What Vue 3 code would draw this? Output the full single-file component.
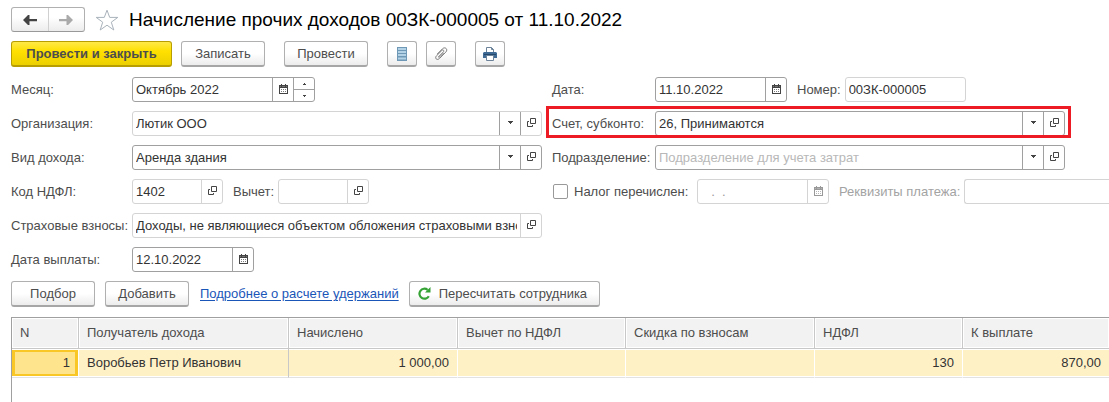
<template>
    <main class="document">
        <svg class="sprite" aria-hidden="true">
            <symbol id="icon-open" viewBox="0 0 9 9">
                <path d="M3.5 .5h5v5h-5zM2 3.5H.5v5h5V7" fill="none" stroke="currentColor" />
            </symbol>
            <symbol id="icon-calendar" viewBox="0 0 9 10">
                <path d="M0 1h9v9H0zM1 4v5h7V4z" fill="currentColor" fill-rule="evenodd" />
                <path d="M2.5 0v1M6.5 0v1" stroke="currentColor" />
                <path d="M2 5.5h1m1 0h1m1 0h1M2 7.5h1m1 0h1m1 0h1" stroke="currentColor" opacity=".7" />
                <path d="M1 2.5h1m1 0h3m1 0h1" stroke="#fff" opacity=".25" />
            </symbol>
            <symbol id="icon-caret" viewBox="0 0 5 3">
                <path d="M0 0h5v1H4v1H3v1H2V2H1V1H0z" fill="currentColor" />
            </symbol>
        </svg>

        <header class="title-bar">
            <div class="history">
                <button type="button" aria-label="Назад">
                    <svg width="14" height="10" viewBox="0 0 14 10">
                        <path d="M0 5l5-5h1.500v4H14v2.200H6.500V10H5z" fill="#444" />
                    </svg>
                </button>
                <button type="button" aria-label="Вперед" class="forward">
                    <svg width="14" height="10" viewBox="0 0 14 10">
                        <path d="M14 5L9 0H7.500v4H0v2.200h7.500V10H9z" fill="#aaa" />
                    </svg>
                </button>
            </div>
            <svg class="star" width="24" height="22" viewBox="0 0 24 22">
                <path d="M12 1.2l2.7 7.2h8.1l-6.5 4.8 2.5 7.8-6.8-4.8L5.200 21l2.500-7.800L1.200 8.400h8.100z" fill="#fff" stroke="#a9b2ba" />
            </svg>
            <h1>Начисление прочих доходов 00ЗК-000005 от 11.10.2022</h1>
        </header>

        <div class="toolbar">
            <button type="button" class="btn primary">Провести и закрыть</button>
            <button type="button" class="btn">Записать</button>
            <button type="button" class="btn group-start">Провести</button>
            <button type="button" class="btn icon group-start" aria-label="Движения">
                <svg width="10" height="14" viewBox="0 0 10 14">
                    <path d="M0 0h10v14H0z" fill="#6e98b5" />
                    <path d="M1 2h8M1 5h8M1 8h8M1 11.500h8" stroke="#b4d2e6" stroke-width="2" />
                </svg>
            </button>
            <button type="button" class="btn icon" aria-label="Файлы">
                <svg width="14" height="14" viewBox="0 0 14 14">
                    <path d="M4.500 9.800L9.300 5c1.300-1.300-.2-2.800-1.500-1.500L2.600 8.700c-2.400 2.400.4 5.200 2.800 2.800l6.300-6.300c2.800-2.800-.6-6-3.300-3.300L3.200 7.100M4.300 9.900c.5.500 1.200.2 1.700-.3l3.600-3.600" fill="none" stroke="#777" />
                </svg>
            </button>
            <button type="button" class="btn icon group-start" aria-label="Печать">
                <svg width="14" height="14" viewBox="0 0 14 14">
                    <path d="M3.500 5V.5h5l2 2V5" fill="#fff" stroke="#6b8299" />
                    <path d="M8.500 .5v2h2" fill="none" stroke="#6b8299" />
                    <path d="M1 5h12l1 1v5H0V6z" fill="#3f6a93" />
                    <path d="M1 7.500h12" stroke="#24486c" />
                    <path d="M3.500 8.500h7v5h-7z" fill="#fff" stroke="#6b8299" />
                </svg>
            </button>
        </div>

        <form class="form" @submit.prevent>
            <div class="column">
                <div class="row">
                    <label for="month">Месяц:</label>
                    <div class="field month">
                        <input id="month" v-model="doc.month" type="text">
                        <button type="button" class="pick" aria-label="Выбрать месяц"><svg width="9" height="10"><use href="#icon-calendar" /></svg></button>
                        <div class="spinner">
                            <button type="button" aria-label="Следующий месяц"><svg width="3" height="2" viewBox="0 0 3 2"><path d="M1 0h1v1h1v1H0V1h1z" fill="#444" /></svg></button>
                            <button type="button" aria-label="Предыдущий месяц"><svg width="3" height="2" viewBox="0 0 3 2"><path d="M0 0h3v1H2v1H1V1H0z" fill="#444" /></svg></button>
                        </div>
                    </div>
                </div>
                <div class="row">
                    <label for="company">Организация:</label>
                    <div class="field wide quiet">
                        <div class="combo">
                            <select id="company"><option>Лютик ООО</option></select>
                            <span class="caret"><svg width="5" height="3"><use href="#icon-caret" /></svg></span>
                        </div>
                        <button type="button" class="pick dark" aria-label="Открыть организацию"><svg width="9" height="9"><use href="#icon-open" /></svg></button>
                    </div>
                </div>
                <div class="row">
                    <label for="income">Вид дохода:</label>
                    <div class="field wide">
                        <div class="combo">
                            <select id="income"><option>Аренда здания</option></select>
                            <span class="caret"><svg width="5" height="3"><use href="#icon-caret" /></svg></span>
                        </div>
                        <button type="button" class="pick" aria-label="Открыть вид дохода"><svg width="9" height="9"><use href="#icon-open" /></svg></button>
                    </div>
                </div>
                <div class="row">
                    <label for="code">Код НДФЛ:</label>
                    <div class="field code quiet">
                        <input id="code" v-model="doc.code" type="text" readonly>
                        <button type="button" class="pick" aria-label="Открыть код"><svg width="9" height="9"><use href="#icon-open" /></svg></button>
                    </div>
                    <label for="deduction" class="inline">Вычет:</label>
                    <div class="field code quiet">
                        <input id="deduction" type="text" readonly>
                        <button type="button" class="pick" aria-label="Открыть вычет"><svg width="9" height="9"><use href="#icon-open" /></svg></button>
                    </div>
                </div>
                <div class="row">
                    <label for="insurance">Страховые взносы:</label>
                    <div class="field wide quiet">
                        <div class="clip"><input id="insurance" v-model="doc.insurance" type="text" readonly></div>
                        <button type="button" class="pick" aria-label="Открыть взносы"><svg width="9" height="9"><use href="#icon-open" /></svg></button>
                    </div>
                </div>
                <div class="row">
                    <label for="pay-date">Дата выплаты:</label>
                    <div class="field pay-date">
                        <input id="pay-date" v-model="doc.payDate" type="text">
                        <button type="button" class="pick" aria-label="Выбрать дату выплаты"><svg width="9" height="10"><use href="#icon-calendar" /></svg></button>
                    </div>
                </div>
            </div>

            <div class="column right">
                <div class="row">
                    <label for="date">Дата:</label>
                    <div class="field date">
                        <input id="date" v-model="doc.date" type="text">
                        <button type="button" class="pick" aria-label="Выбрать дату"><svg width="9" height="10"><use href="#icon-calendar" /></svg></button>
                    </div>
                    <label for="number" class="inline">Номер:</label>
                    <div class="field number quiet">
                        <input id="number" v-model="doc.number" type="text" readonly>
                    </div>
                </div>
                <div class="row marked">
                    <label for="account">Счет, субконто:</label>
                    <div class="field wide">
                        <div class="combo">
                            <select id="account"><option>26, Принимаются</option></select>
                            <span class="caret"><svg width="5" height="3"><use href="#icon-caret" /></svg></span>
                        </div>
                        <button type="button" class="pick" aria-label="Открыть счет"><svg width="9" height="9"><use href="#icon-open" /></svg></button>
                    </div>
                </div>
                <div class="row">
                    <label for="department">Подразделение:</label>
                    <div class="field wide">
                        <div class="combo">
                            <select id="department" class="empty"><option>Подразделение для учета затрат</option></select>
                            <span class="caret"><svg width="5" height="3"><use href="#icon-caret" /></svg></span>
                        </div>
                        <button type="button" class="pick" aria-label="Открыть подразделение"><svg width="9" height="9"><use href="#icon-open" /></svg></button>
                    </div>
                </div>
                <div class="row payment">
                    <input id="tax-paid" v-model="doc.taxPaid" type="checkbox">
                    <label for="tax-paid" class="check-label">Налог перечислен:</label>
                    <div class="field date quiet off">
                        <input v-model="doc.taxDate" type="text" aria-label="Дата перечисления" disabled>
                        <button type="button" class="pick" aria-label="Выбрать дату перечисления" disabled><svg width="9" height="10"><use href="#icon-calendar" /></svg></button>
                    </div>
                    <label for="details" class="inline details-label">Реквизиты платежа:</label>
                    <div class="field details quiet">
                        <input id="details" type="text" disabled>
                    </div>
                </div>
            </div>
        </form>

        <div class="toolbar table-tools">
            <button type="button" class="btn">Подбор</button>
            <button type="button" class="btn">Добавить</button>
            <a href="#">Подробнее о расчете удержаний</a>
            <button type="button" class="btn recalc">
                <svg width="13" height="13" viewBox="0 0 13 13">
                    <path d="M10.800 9.200A5 5 0 1 1 9.600 2.800" fill="none" stroke="#35a235" stroke-width="2.200" />
                    <path d="M12.500 0v5.500H7z" fill="#35a235" />
                </svg>
                Пересчитать сотрудника
            </button>
        </div>

        <div class="table-area">
            <table>
                <colgroup>
                    <col v-for="col in columns" :key="col.key" :style="{ width: col.width }">
                </colgroup>
                <thead>
                    <tr>
                        <th v-for="col in columns" :key="col.key">{{ col.title }}</th>
                    </tr>
                </thead>
                <tbody>
                    <tr v-for="row in rows" :key="row.n">
                        <td v-for="col in columns" :key="col.key" :class="[col.key, { num: col.num }]">{{ row[col.key] }}</td>
                    </tr>
                </tbody>
            </table>
        </div>
    </main>
</template>

<script setup>
import { reactive, ref } from 'vue'

const doc = reactive({
    month: 'Октябрь 2022',
    code: '1402',
    insurance: 'Доходы, не являющиеся объектом обложения страховыми взносами',
    payDate: '12.10.2022',
    date: '11.10.2022',
    number: '00ЗК-000005',
    taxPaid: false,
    taxDate: '  .  .'
})

// Shares of the table width, in percent
const share = (px) => `${(px / 1097) * 100}%`

const columns = [
    { key: 'n', title: 'N', width: share(67), num: true },
    { key: 'person', title: 'Получатель дохода', width: share(210) },
    { key: 'accrued', title: 'Начислено', width: share(169), num: true },
    { key: 'deduction', title: 'Вычет по НДФЛ', width: share(168), num: true },
    { key: 'discount', title: 'Скидка по взносам', width: share(189), num: true },
    { key: 'tax', title: 'НДФЛ', width: share(148), num: true },
    { key: 'total', title: 'К выплате', width: share(146), num: true }
]

const rows = ref([
    { n: 1, person: 'Воробьев Петр Иванович', accrued: '1 000,00', deduction: '', discount: '', tax: '130', total: '870,00' }
])
</script>

<style>
body {
    margin: 0;
    background: #fff;
}
</style>

<style scoped>
.document {
    box-sizing: border-box;
    display: flex;
    flex-direction: column;
    min-height: 100vh;
    padding: 7px 0 0 11px;
    overflow: hidden;
    font: 13px/16px "Liberation Sans", Arial, sans-serif;
    color: #4d4d4d;
}

.document * {
    box-sizing: border-box;
}

.sprite {
    position: absolute;
    width: 0;
    height: 0;
}

button,
input,
select {
    margin: 0;
    font: inherit;
    color: inherit;
}

svg {
    display: block;
    flex: none;
}

/* Title */
.title-bar {
    display: flex;
    align-items: center;
    height: 25px;
}

.history {
    display: flex;
    width: 74px;
    height: 25px;
    border: 1px solid #b0b0b0;
    border-bottom-color: #999;
    border-radius: 3px;
    background: linear-gradient(#fff 40%, #ececec);
}

.history button {
    flex: 1;
    display: flex;
    align-items: center;
    justify-content: center;
    padding: 0;
    border: 0;
    background: none;
}

.history .forward {
    border-left: 1px solid #d0d0d0;
}

.star {
    margin: 0 10px;
}

h1 {
    margin: 0;
    font-size: 19px;
    line-height: 24px;
    font-weight: 400;
    color: #000;
    white-space: nowrap;
}

/* Command bars */
.toolbar {
    display: flex;
    align-items: center;
    gap: 9px;
    margin-top: 9px;
}

.btn {
    display: flex;
    align-items: center;
    justify-content: center;
    min-width: 84px;
    height: 26px;
    padding: 0 12px;
    border: 1px solid #b0b0b0;
    border-bottom: 2px solid #a6a6a6;
    border-radius: 3px;
    background: linear-gradient(#fff 50%, #ececec);
    white-space: nowrap;
}

.btn.primary {
    min-width: 161px;
    border-color: #b89e00;
    background: linear-gradient(#ffe94a, #ffe000 40%, #ecd000);
    font-weight: 700;
}

.btn.icon {
    min-width: 30px;
    padding: 0;
}

.group-start {
    margin-left: 10px;
}

/* Form */
.form {
    display: grid;
    grid-template-columns: minmax(0, 531fr) minmax(0, 557fr);
    gap: 10px;
    margin-top: 10px;
}

.column {
    display: flex;
    flex-direction: column;
    gap: 9px;
}

.row {
    display: flex;
    align-items: center;
    height: 25px;
}

.row label {
    flex: none;
    width: 121px;
    white-space: nowrap;
}

.right .row label {
    width: 103px;
}

.right .row {
    margin-right: 44px;
}

.row label.inline,
.right .row label.inline {
    width: auto;
    margin: 0 4px 0 10px;
}

.field {
    display: flex;
    flex: none;
    height: 25px;
    border: 1px solid #a0a0a0;
    border-radius: 3px;
    background: #fff;
    color: #333;
    overflow: hidden;
}

.field.quiet {
    border-color: #d4d4d4;
}

.field input {
    flex: 1;
    min-width: 0;
    width: 100%;
    padding: 0 3px;
    border: 0;
    outline: 0;
    background: none;
}

.clip {
    flex: 1;
    display: flex;
    min-width: 0;
    padding-right: 3px;
}

.clip input {
    padding-right: 0;
}

.field.wide {
    flex: 1;
    min-width: 0;
}

.month {
    width: 183px;
}

.code {
    width: 91px;
}

.pay-date {
    width: 122px;
}

.date {
    width: 132px;
}

.number {
    width: 121px;
}

.pick,
.caret {
    display: flex;
    align-items: center;
    justify-content: center;
    width: 21px;
    padding: 0 0 2px;
    border: 0;
    border-left: 1px solid #a0a0a0;
    background: none;
    color: #444;
}

.quiet .pick {
    border-left-color: #d4d4d4;
}

.quiet .pick.dark {
    border-left-color: #a0a0a0;
}

.combo {
    flex: 1;
    display: grid;
    min-width: 0;
}

.combo select {
    grid-area: 1 / 1;
    min-width: 0;
    padding: 0 24px 0 3px;
    border: 0;
    outline: 0;
    appearance: none;
    background: none;
}

.combo select.empty {
    color: #b8b8b8;
}

.caret {
    grid-area: 1 / 1;
    justify-self: end;
    pointer-events: none;
}

.spinner {
    display: flex;
    flex-direction: column;
    width: 21px;
    border-left: 1px solid #a0a0a0;
}

.spinner button {
    flex: 1;
    display: flex;
    align-items: center;
    justify-content: center;
    padding: 0;
    border: 0;
    background: none;
}

.spinner button + button {
    border-top: 1px solid #a0a0a0;
}

/* Red frame drawn around the account row */
.marked {
    position: relative;
}

.marked::after {
    content: "";
    position: absolute;
    inset: -5px -6px -2px;
    border: 3px solid #ed1c24;
    pointer-events: none;
}

.right .row.payment {
    margin-right: 0;
}

.payment input[type="checkbox"] {
    flex: none;
    width: 15px;
    height: 15px;
    margin: 0 6px 0 1px;
    border: 1px solid #999;
    border-radius: 2px;
    appearance: none;
    background: #fff;
}

.right .row label.check-label {
    width: 123px;
}

.off input {
    padding-left: 6px;
    white-space: pre;
    color: #999;
}

.off .pick {
    color: #999;
}

.details-label {
    color: #a3a3a3;
}

.field.details {
    flex: 1;
    border-right: 0;
    border-radius: 3px 0 0 3px;
}

/* Table */
.table-tools {
    gap: 10px;
}

.toolbar a {
    color: #1a55b8;
    text-underline-offset: 2px;
    white-space: nowrap;
    margin-left: 1px;
}

.recalc {
    gap: 8px;
    padding: 0 12px 0 8px;
}

.table-area {
    flex: 1;
    margin-top: 10px;
    border: solid #a0a0a0;
    border-width: 1px 0 0 1px;
}

table {
    width: 100%;
    table-layout: fixed;
    border-spacing: 0;
}

th,
td {
    padding: 0 8px;
    border-right: 1px solid #fff;
    box-shadow: inset 0 0 0 1px #fff;
    text-align: left;
    font-weight: 400;
    white-space: nowrap;
}

th {
    height: 31px;
    border-right-color: #c8c8c8;
    border-bottom: 1px solid #c8c8c8;
    background: #f2f2f2;
}

td {
    height: 29px;
    border-bottom: 1px solid #e2e2e2;
    background: #fff1c6;
    box-shadow: inset 0 1px #fff, inset 0 -1px #fff;
    color: #333;
}

th:last-child,
td:last-child {
    border-right: 0;
}

td.num {
    text-align: right;
}

td.n {
    background: #ffe48e;
    box-shadow: inset 0 1px #fff, inset 0 -1px #fff, inset 0 0 0 3px #fac826;
}

td.person {
    border-right-color: #c8c8c8;
}
</style>
